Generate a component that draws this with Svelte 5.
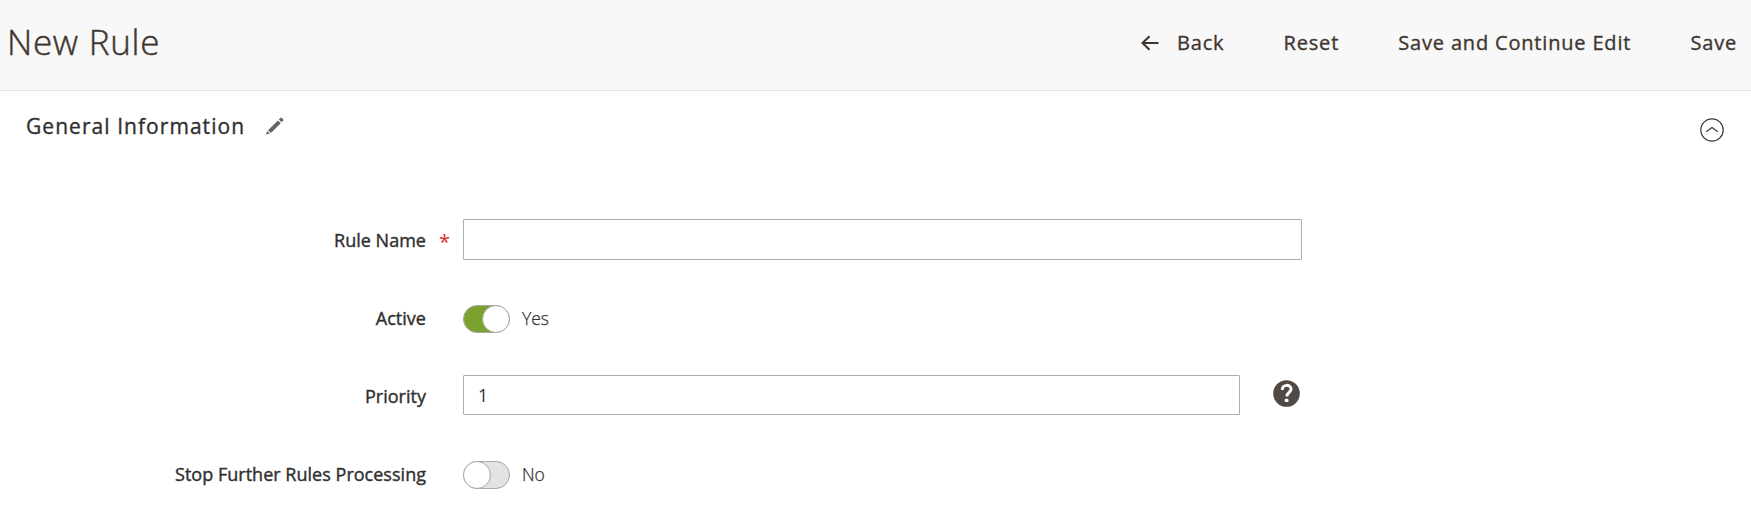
<script lang="ts">
	let name = $state('');
	let active = $state(true);
	let priority = $state('1');
	let stopProcessing = $state(false);
	let open = $state(true);

	function reset() {
		name = '';
		active = true;
		priority = '1';
		stopProcessing = false;
	}
</script>

{#snippet toggle(id: string, on: boolean, flip: () => void)}
	<div class="control">
		<button {id} class="switch" class:on role="switch" aria-checked={on} aria-labelledby="{id}-label" onclick={flip}>
			<span class="knob"></span>
		</button>
		<span class="state">{on ? 'Yes' : 'No'}</span>
	</div>
{/snippet}

<header>
	<h1>New Rule</h1>
	<nav>
		<button class="action back">
			<svg width="18" height="16" viewBox="0 0 18 16" aria-hidden="true">
				<path d="M17.5 8H1.5M8.5 1.2L1.5 8l7 6.8" />
			</svg>
			<span>Back</span>
		</button>
		<button class="action reset" onclick={reset}>Reset</button>
		<button class="action continue">Save and Continue Edit</button>
		<button class="action save">Save</button>
	</nav>
</header>

<section>
	<div class="section-head">
		<h2>General Information</h2>
		<svg class="pencil" width="18" height="18" viewBox="0 0 18 18" aria-hidden="true">
			<path d="M0 17.8l1.2-3.8 2.6 2.6zM2 13.2l9.9-9.8 2.9 2.9-9.9 9.8zM12.8 2.5l1.5-1.5q.8-.8 1.6 0l1.2 1.2q.8.8 0 1.6l-1.5 1.5z" />
		</svg>
		<button class="collapse" aria-label="Toggle section" aria-expanded={open} onclick={() => (open = !open)}>
			<svg width="24" height="24" viewBox="0 0 24 24" aria-hidden="true">
				<circle cx="12" cy="12" r="11.2" />
				<path d="M6.3 13.8L12 9.6l5.7 4.2" />
			</svg>
		</button>
	</div>

	{#if open}
		<div class="form">
			<div class="row">
				<label for="name">Rule Name</label>
				<span class="required">*</span>
				<input id="name" type="text" bind:value={name} />
			</div>
			<div class="row">
				<span class="label" id="active-label">Active</span>
				<span></span>
				{@render toggle('active', active, () => (active = !active))}
			</div>
			<div class="row">
				<label for="priority">Priority</label>
				<span></span>
				<div class="with-help">
					<input id="priority" class="short" type="text" bind:value={priority} />
					<svg class="help" width="27" height="27" viewBox="0 0 27 27" aria-hidden="true">
						<circle cx="13.5" cy="13.5" r="13.3" />
						<path d="M9.2 9.9c.2-6.2 9-5.6 8.9-.8-.1 3-4.1 3.5-4.3 7.2" />
						<rect x="11.7" y="18.7" width="3.8" height="3.4" rx="1.2" />
					</svg>
				</div>
			</div>
			<div class="row">
				<span class="label" id="stop-label">Stop Further Rules Processing</span>
				<span></span>
				{@render toggle('stop', stopProcessing, () => (stopProcessing = !stopProcessing))}
			</div>
		</div>
	{/if}
</section>

<style>
	:global(body) {
		margin: 0;
		background: #fff;
		color: #303030;
		font-family: 'Open Sans', sans-serif;
	}

	header {
		box-sizing: border-box;
		height: 91px;
		display: flex;
		justify-content: space-between;
		padding: 0 14px 0 7px;
		background: #f8f8f8;
		border-bottom: 1px solid #e3e3e3;
	}

	h1 {
		margin: 0;
		font-size: 35px;
		font-weight: 300;
		line-height: 84px;
		letter-spacing: 0.7px;
		color: #41362f;
		-webkit-text-stroke: 0.45px;
	}

	nav {
		display: flex;
		gap: 59.2px;
		height: 85px;
	}

	button {
		padding: 0;
		border: 0;
		background: none;
		font: inherit;
		color: inherit;
		cursor: pointer;
	}

	.action {
		font-size: 20px;
		letter-spacing: 0.82px;
		color: #41362f;
		white-space: nowrap;
		-webkit-text-stroke: 0.35px;
	}

	.back {
		display: flex;
		align-items: center;
		gap: 17.5px;
	}

	.back path {
		fill: none;
		stroke: #41362f;
		stroke-width: 2.1;
	}

	.section-head {
		display: flex;
		align-items: flex-start;
		padding: 0 27px 0 26px;
		height: 128px;
	}

	h2 {
		margin: 0;
		font-size: 21px;
		font-weight: 400;
		line-height: 70px;
		letter-spacing: 1.05px;
		-webkit-text-stroke: 0.35px;
	}

	.pencil {
		margin: 26px 0 0 21px;
		fill: #666;
	}

	.collapse {
		margin: 27px 0 0 auto;
		height: 24px;
	}

	.collapse svg {
		display: block;
		fill: none;
		stroke: #41362f;
		stroke-width: 1.2;
	}

	.form {
		display: grid;
		grid-auto-rows: 78px;
	}

	.row {
		display: grid;
		grid-template-columns: 426px 37px 839px;
		align-items: start;
	}

	label,
	.label {
		text-align: right;
		font-size: 18px;
		line-height: 42px;
		letter-spacing: 0.02px;
		-webkit-text-stroke: 0.4px;
	}

	.required {
		padding-left: 13px;
		font-size: 20px;
		line-height: 46px;
		color: #e22626;
	}

	input {
		box-sizing: border-box;
		width: 100%;
		height: 41px;
		padding: 0 14px;
		border: 1px solid #adadad;
		border-radius: 1px;
		font: 400 17.5px 'Open Sans', sans-serif;
		color: #303030;
	}

	.with-help {
		display: flex;
		justify-content: space-between;
	}

	.short {
		width: 777px;
		height: 40px;
	}

	.help {
		margin: 5px 2px 0 0;
		fill: #514943;
	}

	.help path {
		fill: none;
		stroke: #fff;
		stroke-width: 3;
	}

	.help rect {
		fill: #fff;
	}

	.control {
		display: flex;
		align-items: flex-start;
		gap: 12px;
	}

	.switch {
		box-sizing: border-box;
		display: flex;
		width: 47px;
		height: 28px;
		margin-top: 8px;
		border: 1px solid #aaa6a0;
		border-radius: 14px;
		background: #e3e3e3;
	}

	.knob {
		box-sizing: border-box;
		width: 28px;
		height: 28px;
		margin: -1px;
		border: 1px solid #aaa6a0;
		border-radius: 50%;
		background: #fff;
	}

	.on {
		justify-content: flex-end;
		background: #79a22e;
	}

	.state {
		font-size: 17.5px;
		font-weight: 300;
		line-height: 42px;
		-webkit-text-stroke: 0.25px;
	}
</style>
